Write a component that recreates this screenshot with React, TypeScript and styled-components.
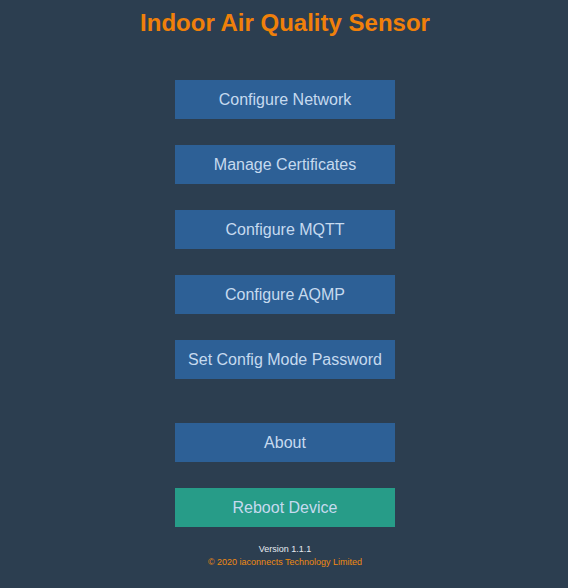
import React from "react";
import styled, { createGlobalStyle } from "styled-components";

const Global = createGlobalStyle`
  html, body { margin: 0; padding: 0; background: #2c3e50; }
  body { font-family: "Liberation Sans", Arial, sans-serif; }
`;

const Page = styled.div`
  width: 568px;
  box-sizing: border-box;
  padding-left: 2px;
  min-height: 588px;
  background: #2c3e50;
  display: flex;
  flex-direction: column;
  align-items: center;
`;

const Title = styled.h1`
  margin: 9px 0 0;
  font-size: 24px;
  line-height: 28px;
  font-weight: bold;
  color: #f0800a;
`;

const Menu = styled.nav`
  margin-top: 43px;
  display: flex;
  flex-direction: column;
  gap: 26px;
`;

const Group = styled.div`
  display: flex;
  flex-direction: column;
  gap: 26px;
  & + & { margin-top: 18px; }
`;

const Button = styled.button<{ $variant?: "primary" | "success" }>`
  width: 220px;
  height: 39px;
  border: none;
  padding: 0;
  margin: 0;
  font-family: "Liberation Sans", Arial, sans-serif;
  font-size: 16px;
  color: #c6daef;
  background: ${(p) => (p.$variant === "success" ? "#279c88" : "#2d6096")};
  cursor: pointer;
`;

const Footer = styled.footer`
  margin-top: 16px;
  display: flex;
  flex-direction: column;
  align-items: center;
  font-size: 9px;
  line-height: 13px;
`;

const Version = styled.div`
  color: #e6ebf0;
`;

const Copyright = styled.div`
  color: #f08a10;
`;

export default function App() {
  return (
    <Page>
      <Global />
      <Title>Indoor Air Quality Sensor</Title>
      <Menu>
        <Group>
          <Button>Configure Network</Button>
          <Button>Manage Certificates</Button>
          <Button>Configure MQTT</Button>
          <Button>Configure AQMP</Button>
          <Button>Set Config Mode Password</Button>
        </Group>
        <Group>
          <Button>About</Button>
          <Button $variant="success">Reboot Device</Button>
        </Group>
      </Menu>
      <Footer>
        <Version>Version 1.1.1</Version>
        <Copyright>© 2020 iaconnects Technology Limited</Copyright>
      </Footer>
    </Page>
  );
}
